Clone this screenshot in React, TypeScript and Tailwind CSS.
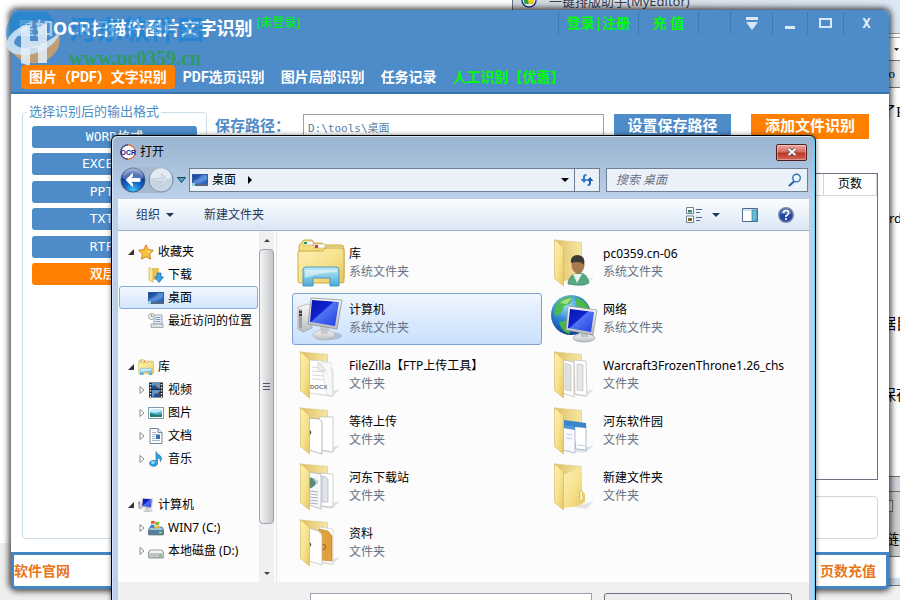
import React, { useState } from 'react';
import clsx from 'clsx';

type SheetKind = 'docx' | 'plain' | 'pages' | 'web' | 'orange' | 'lines' | 'empty' | 'user';

interface IFile {
	name: string;
	type: string;
	icon: React.ReactNode;
}

interface INode {
	name: string;
	icon: React.ReactNode;
	leaf?: boolean;
}

interface IGroup extends INode {
	items: INode[];
}

const Defs = () => (
	<svg className="absolute h-0 w-0" aria-hidden="true">
		<defs>
			<linearGradient id="flap" x1="0" y1="0" x2="1" y2="1">
				<stop offset="0" stopColor="#fbf0b4" />
				<stop offset="0.5" stopColor="#f6e391" />
				<stop offset="1" stopColor="#e8c65c" />
			</linearGradient>
			<linearGradient id="back" x1="0" y1="0" x2="1" y2="0">
				<stop offset="0" stopColor="#dfc066" />
				<stop offset="1" stopColor="#f7e8a4" />
			</linearGradient>
			<linearGradient id="screen" x1="0" y1="0" x2="1" y2="1">
				<stop offset="0" stopColor="#0613a8" />
				<stop offset="0.42" stopColor="#1022cf" />
				<stop offset="0.46" stopColor="#5273f2" />
				<stop offset="1" stopColor="#1c3de0" />
			</linearGradient>
			<linearGradient id="metal" x1="0" y1="0" x2="0" y2="1">
				<stop offset="0" stopColor="#f7f7f7" />
				<stop offset="1" stopColor="#b9bdc1" />
			</linearGradient>
			<linearGradient id="glass" x1="0" y1="0" x2="0" y2="1">
				<stop offset="0" stopColor="#bdeaf7" />
				<stop offset="1" stopColor="#4ea9d6" />
			</linearGradient>
			<linearGradient id="desk" x1="0" y1="0" x2="1" y2="1">
				<stop offset="0" stopColor="#123a8c" />
				<stop offset="0.6" stopColor="#3f7ad0" />
				<stop offset="1" stopColor="#2a5bb0" />
			</linearGradient>
			<radialGradient id="globe" cx="0.4" cy="0.25" r="0.8">
				<stop offset="0" stopColor="#9fdcff" />
				<stop offset="0.5" stopColor="#2c82d4" />
				<stop offset="1" stopColor="#093a86" />
			</radialGradient>
			<radialGradient id="backBtn" cx="0.5" cy="0.95" r="0.9">
				<stop offset="0" stopColor="#39d0ff" />
				<stop offset="0.4" stopColor="#1766c4" />
				<stop offset="0.75" stopColor="#123a94" />
				<stop offset="1" stopColor="#7d9bd4" />
			</radialGradient>
		</defs>
	</svg>
);

const sheets: Record<SheetKind, React.ReactNode> = {
	docx: (
		<>
			<path d="M12 9l15 1 9 9v26l-24-3z" fill="#fff" stroke="#c9c9c9" strokeWidth="0.7" />
			<path d="M24 11l10 0 2 34-6-1z" fill="#f8f8f8" stroke="#d4d4d4" strokeWidth="0.6" />
			<path d="M15 16l8 1M15 20l12 1M15 24l12 1M15 28l12 1" stroke="#d6d6d6" />
			<path d="M21 11l8 9-8-1z" fill="#eee" stroke="#c4c4c4" strokeWidth="0.6" />
			<text x="13" y="38" fontSize="6" fontWeight="700" fill="#777" fontFamily="Liberation Sans, sans-serif">DOCX</text>
		</>
	),
	plain: (
		<>
			<path d="M22 10l14 0v35l-12-2z" fill="#fff" stroke="#b9b9b9" strokeWidth="0.7" />
			<path d="M12 11l10 1q3 1 3 4v31l-13-4z" fill="#fff" stroke="#a8a8a8" strokeWidth="0.8" />
			<path d="M12 23q4 1 1 5z" fill="#443" />
		</>
	),
	pages: (
		<>
			<path d="M23 9l12 1 1 35-12-2z" fill="#fff" stroke="#b9b9b9" strokeWidth="0.7" />
			<path d="M26 13l6 1v26l-6-1z" fill="#e6e6e6" stroke="#bbb" strokeWidth="0.6" />
			<path d="M12 9l11 2v35l-11-4z" fill="#fff" stroke="#b9b9b9" strokeWidth="0.7" />
			<path d="M14 12l6 2v26l-6-1z" fill="#e1e1e1" stroke="#bbb" strokeWidth="0.6" />
		</>
	),
	web: (
		<>
			<path d="M21 17l14 1v25l-10-1z" fill="#fff" stroke="#8aa5c8" strokeWidth="0.7" />
			<path d="M13 13l22 3v5l-22-2z" fill="#3b85cb" />
			<path d="M12 19l12 2v25l-12-3z" fill="#fafafe" stroke="#93a0bd" strokeWidth="0.7" />
			<path d="M12 18l12 2v3l-12-2z" fill="#4f96d6" />
			<path d="M15 27l6 1M15 31l6 1M26 38l8 1" stroke="#a9c3e2" strokeWidth="0.8" />
		</>
	),
	orange: (
		<>
			<path d="M22 8l14 2v35l-12-2z" fill="#fff" stroke="#c8c8c8" strokeWidth="0.6" />
			<path d="M22 10l9 2 4 5v25l-11-1z" fill="#e2a03d" stroke="#b97a25" strokeWidth="0.6" />
			<circle cx="26" cy="28" r="2.6" fill="none" stroke="#9c6418" />
			<path d="M12 9l9 3q4 2 4 5v29l-13-4z" fill="#fdfdfd" stroke="#bbb" strokeWidth="0.7" />
			<path d="M12 23q4 2 1 5z" fill="#554" />
		</>
	),
	lines: (
		<>
			<path d="M22 10l14 1v33l-12-1z" fill="#fff" stroke="#bbb" strokeWidth="0.7" />
			<path d="M25 13l4 1 2 3v22l-6 0z" fill="#dfe3ee" stroke="#aab" strokeWidth="0.6" />
			<path d="M12 9l12 2v35l-12-4z" fill="#f7f8fc" stroke="#aaa" strokeWidth="0.7" />
			<path d="M12 14l6 2q4 6-6 10z" fill="#5c8a79" />
			<path d="M16 16l5 1v5z" fill="#b9d3d1" />
			<path d="M13 28l8 1M13 31l8 1M13 34l8 1M13 37l8 1M13 40l8 1" stroke="#a4a7ba" strokeWidth="0.9" />
		</>
	),
	empty: (
		<>
			<path d="M12 12l19-8v24l3 3v8l-7 4-15 2z" fill="url(#flap)" />
			<path d="M29 28l2-1 1 10-3 1z" fill="#fffbe6" stroke="#c9a740" strokeWidth="0.6" />
		</>
	),
	user: (
		<>
			<path d="M17 43q2-8 10-9 9-1 11 10-6 4-21 1z" fill="#56a882" stroke="#3a7d61" strokeWidth="0.6" />
			<path d="M22 35l4 9 5-9z" fill="#e9f4ef" />
			<ellipse cx="27" cy="26" rx="6.500" ry="8.500" fill="#a97950" />
			<path d="M20 24q-1-8 7-8 8 1 6 10-3-5-13-2z" fill="#3d3a36" />
		</>
	),
};

const Folder = ({ kind }: { kind: SheetKind }) => (
	<svg viewBox="0 0 48 48" className="h-12 w-12 shrink-0" aria-hidden="true">
		<path d="M22 44l21-6-8 8z" fill="#000" opacity="0.1" />
		<path d="M3.500 1l27 2.500v33l-19 6z" fill="url(#back)" stroke="#d5bb62" strokeWidth="0.5" />
		{sheets[kind]}
		<path d="M3.500 0.500l9 8v38.500l-9-7.500z" fill="url(#flap)" stroke="#d4b555" strokeWidth="0.6" />
	</svg>
);

const LibraryIcon = ({ className }: { className: string }) => (
	<svg viewBox="0 0 48 48" className={className} aria-hidden="true">
		<path d="M2 8q0-3 3-5l2-2h8l2 3h8l2 2 17 0q3 0 3 3v30H2z" fill="#f4dd7c" stroke="#c9a53f" strokeWidth="0.9" />
		<path d="M6 2h10v4H6zM17 5h11v4H17zM29 8h15v4H29z" fill="#fff" stroke="#b8a566" strokeWidth="0.6" />
		<path d="M7 3h3v2H7z" fill="#279a3d" />
		<path d="M18 6h3v3h-3z" fill="#d6392b" />
		<path d="M31 9h3v3h-3z" fill="#2b7fc4" />
		<path d="M1 14q0-2 2-2h23l3-3h14q4 0 4 3v30q0 2-2 2H3q-2 0-2-2z" fill="url(#flap)" stroke="#c9a53f" strokeWidth="0.9" />
		<path d="M6 45V31q0-3 3-3h30q3 0 3 3v16h-9v-8H16v8H6z" fill="url(#glass)" stroke="#3f93bd" strokeWidth="0.9" />
		<path d="M8 31h32v2q-20 1-32 6z" fill="#fff" opacity="0.5" />
	</svg>
);

const ComputerIcon = ({ className }: { className: string }) => (
	<svg viewBox="0 0 48 48" className={className} aria-hidden="true">
		<path d="M1 12l10-3 4 2v22l-9 4-5-3z" fill="url(#metal)" stroke="#999" strokeWidth="0.6" />
		<path d="M2 14l3 1v19l-3-2z" fill="#9da1a5" />
		<path d="M2 17l3 0M2 20l3 0" stroke="#222" strokeWidth="1.400" />
		<ellipse cx="32" cy="41" rx="13" ry="4" fill="#000" opacity="0.15" />
		<ellipse cx="27" cy="40" rx="11" ry="5" fill="url(#metal)" stroke="#a2a6aa" strokeWidth="0.6" />
		<path d="M23 31l10 1-2 7h-7z" fill="#c6cace" />
		<path d="M14 3l31 2-5 29-29-5z" fill="url(#metal)" stroke="#8f9397" strokeWidth="0.8" />
		<path d="M15 5l27 2-4 24-25-4z" fill="url(#screen)" />
	</svg>
);

const NetworkIcon = () => (
	<svg viewBox="0 0 48 48" className="h-12 w-12 shrink-0" aria-hidden="true">
		<circle cx="20" cy="20" r="20" fill="url(#globe)" />
		<path d="M7 7q8-7 15-5l-3 7-6 2-2 6-7 5q-2-9 3-15zM25 3q9 1 13 10l-7 1-6-4zM8 27l9-2 4 8-3 6q-8-3-10-12z" fill="#4dbb3d" opacity="0.9" />
		<path d="M9 8q6-5 12-5l-5 6z" fill="#c6f0a3" opacity="0.7" />
		<ellipse cx="33" cy="43" rx="11" ry="4" fill="url(#metal)" stroke="#8f9397" strokeWidth="0.6" />
		<path d="M29 34h9l-1 8h-7z" fill="#bfc3c7" />
		<path d="M17 11l29 4-4 25-27-5z" fill="url(#metal)" stroke="#8f9397" strokeWidth="0.7" />
		<path d="M19 14l24 3-3 20-23-4z" fill="url(#screen)" />
	</svg>
);

const DesktopIcon = () => (
	<svg viewBox="0 0 16 16" className="h-4 w-4 shrink-0" aria-hidden="true">
		<path d="M0 2h16v12H0z" fill="#2f5c9f" />
		<path d="M1 3h14v9H1z" fill="url(#desk)" />
		<path d="M1 9q6-1 9-6h5v4q-5 4-14 5z" fill="#78aeea" opacity="0.45" />
		<path d="M0 12h16v2H0z" fill="#56687e" />
		<path d="M0 11h3v3H0z" fill="#8fd1e8" />
	</svg>
);

const StarIcon = () => (
	<svg viewBox="0 0 16 16" className="h-4 w-4 shrink-0" aria-hidden="true">
		<path d="M8 0.800l2.200 4.900 5.200 0.600-3.900 3.600 1.100 5.300L8 12.600l-4.600 2.600 1.100-5.300L0.600 6.300l5.200-0.600z" fill="#fbc13b" stroke="#d97d1c" />
		<path d="M8 3l1.400 3.600 3.600 0.500-3 2z" fill="#fdeab0" />
	</svg>
);

const DownloadIcon = () => (
	<svg viewBox="0 0 16 16" className="h-4 w-4 shrink-0" aria-hidden="true">
		<path d="M4 1h7v12H4z" fill="#e6c45a" />
		<path d="M1 0.500l4 2.500v12l-4-2z" fill="#f7e494" stroke="#c9a53f" strokeWidth="0.6" />
		<path d="M9 6h4v4h2.500L11 15.500 6.500 10H9z" fill="#39a4e6" stroke="#1569ab" strokeWidth="0.7" />
	</svg>
);

const RecentIcon = () => (
	<svg viewBox="0 0 16 16" className="h-4 w-4 shrink-0" aria-hidden="true">
		<path d="M6 2h8v9H6z" fill="#eef2f8" stroke="#8693a8" strokeWidth="0.8" />
		<path d="M7.500 4.500h5M7.500 6.500h5M7.500 8.500h5" stroke="#5d83b5" strokeWidth="0.8" />
		<path d="M3 11h12v3.500H3z" fill="#dfe3e8" stroke="#8b9097" strokeWidth="0.7" />
		<circle cx="3.500" cy="3.500" r="3" fill="#f6f6f6" stroke="#8b9097" strokeWidth="0.8" />
		<path d="M3.500 1.500v2h1.500" fill="none" stroke="#555" strokeWidth="0.7" />
	</svg>
);

const VideoIcon = () => (
	<svg viewBox="0 0 16 16" className="h-4 w-4 shrink-0" aria-hidden="true">
		<path d="M1 0.500h14v15H1z" fill="#222b35" />
		<path d="M4 1h8v6H4zM4 8h8v7H4z" fill="#4b9bd8" />
		<path d="M4 4l4-1 4 4H4zM5 15q3-6 7-5v5z" fill="#214e88" />
		<path d="M8 2l3 2-2 2zM6 10l4-1v3z" fill="#d9854b" />
		<path d="M2.500 2v13M13.500 2v13" stroke="#e5edf3" strokeWidth="1.400" strokeDasharray="1.5 1.500" />
	</svg>
);

const PictureIcon = () => (
	<svg viewBox="0 0 16 16" className="h-4 w-4 shrink-0" aria-hidden="true">
		<path d="M0.500 2.500h15v11H0.500z" fill="#fff" stroke="#7f98ad" />
		<path d="M2 4h12v8H2z" fill="#4fb2df" />
		<path d="M2 4h12v2q-5 3-12 1z" fill="#c7ecf8" />
		<path d="M2 8q6 3 12 1v3H2z" fill="#247f71" />
	</svg>
);

const DocumentIcon = () => (
	<svg viewBox="0 0 16 16" className="h-4 w-4 shrink-0" aria-hidden="true">
		<path d="M2 0.500h8l4 4v11H2z" fill="#fcfdff" stroke="#76879b" />
		<path d="M10 0.500v4h4" fill="#dce6f1" stroke="#76879b" />
		<path d="M4 4.500h4M4 6.500h8M4 8.500h3M4 10.500h3M4 12.500h8" stroke="#8fa5bd" strokeWidth="0.8" />
		<path d="M8 7h4v4H8z" fill="#3b6fb0" />
	</svg>
);

const MusicIcon = () => (
	<svg viewBox="0 0 16 16" className="h-4 w-4 shrink-0" aria-hidden="true">
		<path d="M8 0.500q1 3 4 4 3 2 0.500 6 0-3-3-4v5.500a4 3 0 1 1-1.500-2z" fill="#2f9fdd" stroke="#1670ab" strokeWidth="0.6" />
		<ellipse cx="5" cy="11.500" rx="2" ry="1.400" fill="#92d6f4" />
	</svg>
);

const DriveIcon = ({ system }: { system?: boolean }) => (
	<svg viewBox="0 0 16 16" className="h-4 w-4 shrink-0" aria-hidden="true">
		<path d="M2 7h12l2 3.500v3q0 1.500-1.500 1.500h-13Q0 15 0 13.500v-3z" fill={system ? '#587f99' : '#bfc3c5'} stroke="#6e7478" strokeWidth="0.7" />
		<path d="M2.500 7.500h11l1.500 2.500H1z" fill={system ? '#9ec4d6' : '#f2f3f3'} />
		<path d="M11 12.500h3" stroke={system ? '#8af06e' : '#54c24b'} strokeWidth="1.500" />
		{system && (
			<>
				<path d="M3 1.500q2-1.500 4 0L6.500 4Q5 3 3 4z" fill="#e5532a" />
				<path d="M7.500 1.500q2 1 4 0L11 4.500q-2 1-4 0z" fill="#77b82f" />
				<path d="M2.500 5q2-1.200 4 0L6 8Q4 7 2 8z" fill="#2f86d6" />
				<path d="M7 5q2 1 4 0l-0.500 3q-2 1-4 0z" fill="#f9bf24" />
			</>
		)}
	</svg>
);

const Caret = ({ className = 'h-1 w-2' }: { className?: string }) => (
	<svg viewBox="0 0 8 4" className={className} aria-hidden="true">
		<path d="M0 0h8L4 4z" fill="currentColor" />
	</svg>
);

const groups: IGroup[] = [
	{
		name: '收藏夹',
		icon: <StarIcon />,
		items: [
			{ name: '下载', icon: <DownloadIcon />, leaf: true },
			{ name: '桌面', icon: <DesktopIcon />, leaf: true },
			{ name: '最近访问的位置', icon: <RecentIcon />, leaf: true },
		],
	},
	{
		name: '库',
		icon: <LibraryIcon className="h-4 w-4 shrink-0" />,
		items: [
			{ name: '视频', icon: <VideoIcon /> },
			{ name: '图片', icon: <PictureIcon /> },
			{ name: '文档', icon: <DocumentIcon /> },
			{ name: '音乐', icon: <MusicIcon /> },
		],
	},
	{
		name: '计算机',
		icon: <ComputerIcon className="h-4 w-4 shrink-0" />,
		items: [
			{ name: 'WIN7 (C:)', icon: <DriveIcon system /> },
			{ name: '本地磁盘 (D:)', icon: <DriveIcon /> },
		],
	},
];

const files: IFile[] = [
	{ name: '库', type: '系统文件夹', icon: <LibraryIcon className="h-12 w-12 shrink-0" /> },
	{ name: 'pc0359.cn-06', type: '系统文件夹', icon: <Folder kind="user" /> },
	{ name: '计算机', type: '系统文件夹', icon: <ComputerIcon className="h-12 w-12 shrink-0" /> },
	{ name: '网络', type: '系统文件夹', icon: <NetworkIcon /> },
	{ name: 'FileZilla【FTP上传工具】', type: '文件夹', icon: <Folder kind="docx" /> },
	{ name: 'Warcraft3FrozenThrone1.26_chs', type: '文件夹', icon: <Folder kind="pages" /> },
	{ name: '等待上传', type: '文件夹', icon: <Folder kind="plain" /> },
	{ name: '河东软件园', type: '文件夹', icon: <Folder kind="web" /> },
	{ name: '河东下载站', type: '文件夹', icon: <Folder kind="lines" /> },
	{ name: '新建文件夹', type: '文件夹', icon: <Folder kind="empty" /> },
	{ name: '资料', type: '文件夹', icon: <Folder kind="orange" /> },
];

const formats = ['WORD格式', 'EXCEL格式', 'PPT格式', 'TXT格式', 'RTF格式', '双层PDF'];
const tabs = ['图片（PDF）文字识别', 'PDF选页识别', '图片局部识别', '任务记录', '人工识别【优惠】'];

const EditorWindow = () => (
	<div className="absolute inset-y-0 left-[512px] right-0 flex flex-col border-l border-gray-500 bg-white font-['Liberation_Serif','Noto_Sans_CJK_SC',serif] text-[15px] text-black">
		<div className="flex h-[33px] items-start gap-3 bg-gradient-to-r from-[#d5dbe1] to-[#dbe8f5] pl-2 font-['Noto_Sans','Noto_Sans_CJK_SC',sans-serif] text-[13px] leading-[18px] text-gray-700">
			<svg viewBox="0 0 18 18" className="-mt-2 h-4 w-4 shrink-0" aria-hidden="true">
				<circle cx="9" cy="9" r="8" fill="#fff" stroke="#1a2ea0" strokeWidth="1.500" />
				<circle cx="6.500" cy="10" r="3.500" fill="#2fa83a" />
				<circle cx="11.500" cy="10" r="3.500" fill="#f3cf1c" />
			</svg>
			<span className="-mt-2">一键排版助手(MyEditor)</span>
		</div>
		<div className="h-[5px] border-y border-gray-400 bg-white" />
		<div className="flex h-[22px] items-center justify-end bg-white pr-px">
			<Caret className="h-[3px] w-[5px]" />
		</div>
		<div className="h-[28px] border-y border-gray-500 bg-gray-200 text-right text-[13px] leading-[26px]">
			<span className="mr-[5px]">o</span>
		</div>
		<div className="flex h-[388px] justify-end">
			<div className="w-[11px] overflow-hidden whitespace-nowrap pt-3">
				<p className="-ml-2 mb-[82px] leading-6">了F</p>
				<p className="mb-[82px] font-['Noto_Sans',sans-serif] text-[13px] leading-6">rd</p>
				<p className="-ml-2 mb-[47px] leading-6">据目</p>
				<p className="-ml-2 leading-6">保存</p>
			</div>
		</div>
		<div className="h-[16px] border-y border-gray-500 bg-gray-300" />
		<div className="flex h-[64px] justify-end bg-[#d0d0d0]">
			<div className="w-[11px] overflow-hidden whitespace-nowrap pt-2 text-sm">
				<span className="-ml-2 block h-3 w-3 border border-gray-500 bg-white" />
				<p className="-ml-1 mt-4 leading-6">链接</p>
			</div>
		</div>
		<div className="h-[22px] border-t border-gray-500 bg-white" />
		<div className="h-[8px] border-b border-gray-500 bg-[#cfdff0]" />
		<div className="flex-1 bg-[#f0f0f0]" />
	</div>
);

const Watermark = () => (
	<div className="pointer-events-none absolute -left-1.5 top-0.5 flex items-start gap-2">
		<svg viewBox="0 0 56 56" className="h-14 w-14" aria-hidden="true">
			<path d="M3 32A27 27 0 0 0 54 34L55 22Q40 33 22 38q-12 3-19-6z" fill="#d3a069" opacity="0.85" />
			<path d="M3 31A25 25 0 0 1 50 11q-7-5-19-3Q12 12 6 30z" fill="#1583d0" opacity="0.6" />
			<path d="M1 34Q2 20 22 12v6Q9 25 9 31q4 7 18 4 15-3 28-15Q50 36 28 42 6 46 1 34z" fill="#c9e2f5" opacity="0.9" />
			<path d="M16 16l9-3v16h8V15l9-4v40h-9V36h-8v18l-9-3z" fill="#e4eff8" opacity="0.85" />
		</svg>
		<div className="flex flex-col">
			<span className="text-[27px] font-bold leading-[34px] text-[#1583d8]/70 font-['Noto_Sans_CJK_SC',sans-serif]">河东软件园</span>
			<span className="text-xl font-bold leading-6 text-[#309a62] font-['Liberation_Serif',serif]">www.pc0359.cn</span>
		</div>
	</div>
);

const WindowButtons = () => {
	const cell = 'flex h-[22px] items-center justify-center border-l border-[#3d78b2]';
	return (
		<div className="flex items-start pt-[2px] text-sm font-bold font-['Noto_Sans','Noto_Sans_CJK_SC',sans-serif]">
			<button className={clsx(cell, 'w-20 text-[#00ff00]')}>登录|注册</button>
			<button className={clsx(cell, 'w-[60px] text-[#00ff00]')}>充 值</button>
			<span className={clsx(cell, 'w-8')} />
			<button className={clsx(cell, 'w-[42px]')} aria-label="菜单">
				<svg viewBox="0 0 12 13" className="h-[13px] w-3" aria-hidden="true">
					<path d="M0 0h12v3H0zM0 5h12l-6 8z" fill="#d9e8f6" />
				</svg>
			</button>
			<button className={clsx(cell, 'w-[35px]')} aria-label="最小化">
				<span className="mt-2 h-[3px] w-[10px] bg-[#d9e8f6]" />
			</button>
			<button className={clsx(cell, 'w-9')} aria-label="最大化">
				<span className="h-[10px] w-[13px] border-2 border-[#d9e8f6]" />
			</button>
			<button className={clsx(cell, "w-[46px] font-['DejaVu_Sans_Mono',monospace] text-[#e6f0fa]")}>X</button>
		</div>
	);
};

const MainWindow = () => {
	const [tab, setTab] = useState(0);
	const [format, setFormat] = useState(5);

	return (
		<div className="absolute inset-x-[11px] top-[10px] flex h-[579px] flex-col rounded-md bg-white font-['DejaVu_Sans_Mono','Noto_Sans_CJK_SC',sans-serif] shadow-[0_0_6px_2px_rgba(0,0,0,0.75)]">
			<header className="relative flex h-[84px] flex-col justify-between rounded-t-md border-b-2 border-[#3a75b0] bg-[#4d8cc8] pb-[3px]">
				<div className="flex justify-between">
					<div className="flex items-start gap-1 pl-[6px] font-['Noto_Sans','Noto_Sans_CJK_SC',sans-serif]">
						<h1 className="pt-1 text-lg font-bold leading-7 text-white">
							<span className="text-[#a5cdf0]">星如</span>OCR扫描件图片文字识别
						</h1>
						<span className="pt-1 text-[12px] font-medium leading-[18px] text-[#00ef20]">[未登录]</span>
					</div>
					<WindowButtons />
				</div>
				<Watermark />
				<nav className="relative flex pl-[10px] text-sm font-bold leading-6 font-['Roboto','Noto_Sans_CJK_SC',sans-serif]">
					{tabs.map((name, idx) => (
						<button
							key={name}
							onClick={() => setTab(idx)}
							className={clsx(
								'rounded-sm px-2',
								tab === idx ? 'bg-[#ff8000]' : '',
								idx === 4 ? 'text-[#00ff00]' : 'text-white'
							)}
						>
							{name}
						</button>
					))}
				</nav>
			</header>
			<main className="flex flex-1 gap-2 px-[11px] pb-[13px] pt-[9px]">
				<fieldset className="w-[185px] rounded border border-[#cbdde9] px-[9px] text-[#4d8cc8]">
					<legend className="-ml-[5px] px-[2px] text-[13px] leading-[18px]">选择识别后的输出格式</legend>
					<div className="mt-[5px] flex h-[159px] flex-col justify-between">
						{formats.map((name, idx) => (
							<button
								key={name}
								onClick={() => setFormat(idx)}
								className={clsx(
									'h-[22px] rounded-[3px] text-[13px] font-medium leading-[22px] text-white',
									format === idx ? 'bg-[#ff8000]' : 'bg-[#4d8cc8]'
								)}
							>
								{name}
							</button>
						))}
					</div>
				</fieldset>
				<section className="flex flex-1 flex-col pt-[11px]">
					<div className="flex items-center pr-[9px] text-[15px] font-bold">
						<label htmlFor="save-path" className="w-[88px] text-[#4d8cc8]">
							保存路径：
						</label>
						<input
							id="save-path"
							defaultValue="D:\tools\桌面"
							className="h-[25px] min-w-0 flex-1 border border-gray-400 px-1 text-[11px] font-normal text-[#5b7fa6]"
						/>
						<button className="ml-[10px] h-[25px] w-[117px] bg-[#4d8cc8] text-white">设置保存路径</button>
						<button className="ml-5 h-[25px] w-[118px] bg-[#ff8000] text-white">添加文件识别</button>
					</div>
					<div className="mt-[34px] h-[307px] border border-gray-500 text-[12px]">
						<table className="w-full">
							<thead>
								<tr className="h-[21px] border-b border-gray-300">
									<th />
									<th className="w-[53px] border-x border-gray-300 font-normal">页数</th>
								</tr>
							</thead>
						</table>
					</div>
					<div className="mt-4 flex-1 rounded border border-gray-300" />
				</section>
			</main>
			<footer className="flex h-[37px] items-center justify-between rounded-b border-[3px] border-[#4585c4] pr-[10px] text-sm font-bold text-[#e8771a]">
				<a href="#site">软件官网</a>
				<a href="#recharge">页数充值</a>
			</footer>
		</div>
	);
};

const NavRow = () => (
	<div className="flex h-6 items-center pl-[2px] pr-px">
		<div className="flex gap-[2px] rounded-full bg-[#a5b9d1]">
			<button aria-label="后退">
				<svg viewBox="0 0 26 26" className="h-[26px] w-[26px]" aria-hidden="true">
					<circle cx="13" cy="13" r="12" fill="url(#backBtn)" stroke="#3c5784" />
					<path d="M2.500 11a10.500 10.500 0 0 1 21 0q-10 5-21 0z" fill="#fff" opacity="0.28" />
					<path d="M12.500 6.500L6 13l6.500 6.500v-3l-2-2H20v-3h-9.500l2-2z" fill="#fff" stroke="#fff" strokeWidth="0.8" />
				</svg>
			</button>
			<button aria-label="前进">
				<svg viewBox="0 0 26 26" className="h-[26px] w-[26px]" aria-hidden="true">
					<circle cx="13" cy="13" r="12" fill="#c6d4e3" stroke="#7f93ad" />
					<path d="M2.500 11a10.500 10.500 0 0 1 21 0q-10 4-21 0z" fill="#fff" opacity="0.5" />
					<path d="M13.500 6.500L20 13l-6.500 6.500v-3l2-2H6v-3h9.500l-2-2z" fill="#d5dfe9" stroke="#b3c2d2" strokeWidth="0.6" />
				</svg>
			</button>
		</div>
		<button className="mx-[3px]" aria-label="最近的位置">
			<svg viewBox="0 0 9 6" className="h-[6px] w-[9px]" aria-hidden="true">
				<path d="M0.500 0.500h8l-4 5z" fill="#45a6cf" stroke="#22405f" />
			</svg>
		</button>
		<div className="flex h-6 flex-1 items-center border border-[#6c7f96] bg-[#eaf1f9] pl-[2px]">
			<DesktopIcon />
			<span className="ml-1">桌面</span>
			<svg viewBox="0 0 4 8" className="ml-3 h-2 w-1" aria-hidden="true">
				<path d="M0 0l4 4-4 4z" fill="#000" />
			</svg>
			<button className="ml-auto mr-[5px]" aria-label="历史位置">
				<Caret />
			</button>
			<button className="flex h-full w-[25px] items-center justify-center border-l border-[#6c7f96]" aria-label="刷新">
				<svg viewBox="0 0 14 14" className="h-[14px] w-[14px]" aria-hidden="true">
					<path d="M6.500 1Q3 1 3 4v2H0.500L4 10l3.500-4H5V4q0-1.500 1.500-1.500z" fill="#2b78cd" />
					<path d="M7.500 13q3.500 0 3.500-3V8h2.500L10 4 6.500 8H9v2q0 1.500-1.500 1.500z" fill="#1c5fb0" />
				</svg>
			</button>
		</div>
		<div className="ml-[6px] flex h-6 w-[202px] items-center border border-[#6c7f96] bg-[#eaf1f9] pl-[9px] pr-[5px]">
			<input
				aria-label="搜索 桌面"
				placeholder="搜索 桌面"
				className="min-w-0 flex-1 bg-transparent italic outline-none placeholder:text-gray-500"
			/>
			<svg viewBox="0 0 14 14" className="h-[14px] w-[14px]" aria-hidden="true">
				<path d="M6 8.500l-4.500 4" stroke="#2d5f9e" strokeWidth="2" strokeLinecap="round" />
				<circle cx="8.500" cy="5" r="3.800" fill="#e9f5fd" stroke="#3a74b8" strokeWidth="1.400" />
			</svg>
		</div>
	</div>
);

const Toolbar = () => (
	<div className="mt-[7px] flex h-8 items-center border-b border-[#a0afc3] bg-gradient-to-b from-[#fbfdff] to-[#dae6f4] pl-[18px] pr-[15px] text-[#1e395b]">
		<button className="flex items-center gap-[6px]">
			组织
			<Caret />
		</button>
		<button className="ml-[30px]">新建文件夹</button>
		<button className="ml-auto flex items-center gap-[10px]" aria-label="更改视图">
			<svg viewBox="0 0 16 16" className="h-4 w-4" aria-hidden="true">
				<path d="M0.500 0.500h7v6h-7zM0.500 9h7v6.500h-7z" fill="#fff" stroke="#6f7f92" />
				<path d="M2 3h4v2.500H2z" fill="#2b8b6c" />
				<path d="M2 11h4v3H2z" fill="#716a2d" />
				<path d="M10 2.500h6M10 5.500h4M10 10.500h6M10 13.500h4" stroke="#4c6a92" />
			</svg>
			<Caret />
		</button>
		<button className="ml-[22px]" aria-label="预览窗格">
			<svg viewBox="0 0 16 14" className="h-[14px] w-4" aria-hidden="true">
				<path d="M0.500 0.500h15v13h-15z" fill="#fff" stroke="#4f6a8c" />
				<path d="M1 1h14v2H1z" fill="#d3e0ee" />
				<path d="M10 2h5v11h-5z" fill="#62bcd6" stroke="#3c7f9e" strokeWidth="0.7" />
			</svg>
		</button>
		<button className="ml-5" aria-label="帮助">
			<svg viewBox="0 0 16 16" className="h-4 w-4" aria-hidden="true">
				<circle cx="8" cy="8" r="7.300" fill="#2547a5" stroke="#7d8ba5" strokeWidth="1.400" />
				<path d="M2.500 7a5.500 5.500 0 0 1 11 0z" fill="#fff" opacity="0.25" />
				<path d="M5.500 6q0-2.500 2.600-2.500T10.600 6Q10.600 7.300 8 9v1" fill="none" stroke="#fff" strokeWidth="1.700" />
				<circle cx="8" cy="12" r="1.100" fill="#fff" />
			</svg>
		</button>
	</div>
);

const Tree = () => {
	const [active, setActive] = useState('桌面');

	return (
		<nav className="flex w-[141px] flex-col gap-[23px] overflow-hidden pb-5 pl-px pt-[9px]">
			{groups.map(group => (
				<div key={group.name}>
					<button className="flex h-[23px] w-full items-center pl-[9px]">
						<svg viewBox="0 0 6 6" className="h-[6px] w-[6px]" aria-hidden="true">
							<path d="M6 0v6H0z" fill="#333" />
						</svg>
						<span className="ml-1">{group.icon}</span>
						<span className="ml-1">{group.name}</span>
					</button>
					{group.items.map(item => (
						<button
							key={item.name}
							onClick={() => setActive(item.name)}
							className={clsx(
								'flex h-[23px] w-[139px] items-center whitespace-nowrap rounded-[3px] border pl-[18px]',
								active === item.name
									? 'border-[#84acdd] bg-gradient-to-b from-[#f3f8ff] to-[#d3e5fc]'
									: 'border-transparent'
							)}
						>
							<span className="w-[10px]">
								{!item.leaf && (
									<svg viewBox="0 0 6 8" className="ml-px h-2 w-[6px]" aria-hidden="true">
										<path d="M1 0.500L5 4 1 7.500z" fill="#fff" stroke="#8c8c8c" />
									</svg>
								)}
							</span>
							{item.icon}
							<span className="ml-1">{item.name}</span>
						</button>
					))}
				</div>
			))}
		</nav>
	);
};

const ScrollBar = () => (
	<div className="mr-[2px] flex w-[15px] flex-col items-center bg-[#f0f0f0] text-gray-700">
		<span className="flex h-[18px] items-center">
			<Caret className="h-[3px] w-[6px] rotate-180" />
		</span>
		<div className="flex w-full flex-1 flex-col items-center justify-center gap-[2px] rounded-sm border border-gray-400 bg-gradient-to-r from-[#f5f5f5] to-[#c4c5c9]">
			<span className="h-px w-[7px] bg-gray-600" />
			<span className="h-px w-[7px] bg-gray-600" />
			<span className="h-px w-[7px] bg-gray-600" />
		</div>
		<span className="flex h-[58px] items-end pb-[7px]">
			<Caret className="h-[3px] w-[6px]" />
		</span>
	</div>
);

const OpenDialog = () => {
	const [selected, setSelected] = useState('计算机');

	return (
		<div
			role="dialog"
			aria-label="打开"
			className="absolute left-[111px] right-[84px] top-[135px] rounded-t-md border border-black bg-[#b9d1ea] bg-[linear-gradient(#9ab3d1,#bdd2ea_64px,#b9d1ea_65px)] px-[6px] font-['Noto_Sans','Noto_Sans_CJK_SC',sans-serif] text-[12px] leading-[18px] text-black shadow-[inset_-1px_0_0_#5fd3f3,inset_1px_1px_0_#d5e3f2,0_0_5px_rgba(0,0,0,0.5)]"
		>
			<div className="flex h-8 items-center pl-[2px] pr-[2px]">
				<svg viewBox="0 0 16 16" className="h-4 w-4" aria-hidden="true">
					<circle cx="8" cy="8" r="7.200" fill="#fff" stroke="#d9692f" strokeWidth="1.300" />
					<path d="M8 0.800a7.200 7.200 0 0 0 0 14.400" fill="none" stroke="#3c4aa0" strokeWidth="1.300" />
					<text x="0.500" y="10.500" fontSize="7" fontWeight="700" fill="#1b1b8c" fontFamily="Liberation Sans, sans-serif">OCR</text>
				</svg>
				<span className="ml-1">打开</span>
				<button
					aria-label="关闭"
					className="ml-auto flex h-[17px] w-[31px] items-center justify-center rounded-[2px] border border-[#4c1d22] bg-[linear-gradient(#e9a79c,#d5695b_48%,#bb3323_52%,#d2695c)] shadow-[inset_0_0_0_1px_rgba(255,255,255,0.35)]"
				>
					<svg viewBox="0 0 12 10" className="h-[10px] w-3" aria-hidden="true">
						<path d="M2.500 2l7 6M9.500 2l-7 6" stroke="#4a3438" strokeWidth="3.600" />
						<path d="M2.500 2l7 6M9.500 2l-7 6" stroke="#fff" strokeWidth="2.200" />
					</svg>
				</button>
			</div>
			<NavRow />
			<Toolbar />
			<div className="flex bg-[#fcfcfc]">
				<Tree />
				<ScrollBar />
				<div className="grid flex-1 auto-rows-[52px] grid-cols-[repeat(auto-fill,250px)] gap-1 border-l border-gray-200 pl-[15px] pt-[6px]">
					{files.map(file => (
						<button
							key={file.name}
							onClick={() => setSelected(file.name)}
							className={clsx(
								'flex items-center gap-1 rounded-[3px] border pl-1 text-left',
								selected === file.name
									? 'border-[#7da2ce] bg-gradient-to-b from-[#eef5fe] to-[#c9e0fc]'
									: 'border-transparent'
							)}
						>
							{file.icon}
							<span className="flex flex-col whitespace-nowrap">
								<span>{file.name}</span>
								<span className="text-gray-500">{file.type}</span>
							</span>
						</button>
					))}
				</div>
			</div>
			<div className="flex h-24 items-start gap-3 bg-[#f0f0f0] pl-[192px] pr-[17px] pt-[11px]">
				<input aria-label="文件名" className="h-6 min-w-0 flex-1 border border-gray-400 bg-white px-1" />
				<select aria-label="文件类型" className="h-6 w-[188px] rounded-[3px] border border-gray-500 bg-[#ededed] px-1" />
			</div>
		</div>
	);
};

const App = () => (
	<div className="relative h-screen min-h-[600px] overflow-hidden bg-[linear-gradient(#fff_543px,#eee_543px)]">
		<Defs />
		<EditorWindow />
		<MainWindow />
		<OpenDialog />
	</div>
);

export default App;
